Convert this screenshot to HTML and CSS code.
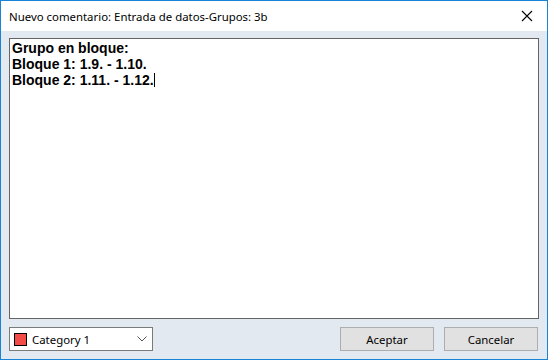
FILE: index.html
```html
<!DOCTYPE html>
<html lang="es">
<head>
<meta charset="utf-8">
<link rel="stylesheet" href="styles.css">
</head>
<body>
<div class="window">
  <div class="titlebar">
    <span class="title">Nuevo comentario: Entrada de datos-Grupos: 3b</span>
    <svg class="close" width="12" height="12" viewBox="0 0 12 12"><path d="M1 1 L11 11 M11 1 L1 11" stroke="#000" stroke-width="1.1" fill="none"/></svg>
  </div>
  <div class="content">
    <div class="editor">
      <div class="line">Grupo en bloque:</div>
      <div class="line">Bloque 1: 1.9. - 1.10.</div>
      <div class="line">Bloque 2: 1.11. - 1.12.<span class="caret"></span></div>
    </div>
    <div class="footer">
      <div class="combo">
        <span class="swatch"></span>
        <span class="combo-text">Category 1</span>
        <svg class="chev" width="10" height="6" viewBox="0 0 10 6"><path d="M0.5 0.5 L5 5 L9.5 0.5" stroke="#555" stroke-width="1" fill="none"/></svg>
      </div>
      <div class="buttons">
        <div class="btn">Aceptar</div>
        <div class="btn">Cancelar</div>
      </div>
    </div>
  </div>
</div>
</body>
</html>
```
FILE: styles.css
```css
* { box-sizing: border-box; }
html, body { margin: 0; padding: 0; background: #fff; }
.window {
  width: 548px;
  height: 360px;
  border: 1px solid #1883d7;
  display: flex;
  flex-direction: column;
  background: #e3e9f1;
  font-family: "Noto Sans", "Open Sans", sans-serif;
}
.titlebar {
  height: 30px;
  background: #fff;
  display: flex;
  align-items: center;
  justify-content: space-between;
  padding: 0 10px 0 8px;
  flex: none;
}
.title {
  font-size: 11.4px;
  color: #000;
}
.close { display: block; margin-right: 4px; }
.content {
  flex: 1;
  display: flex;
  flex-direction: column;
  padding: 7px 8px 8px 8px;
  gap: 8px;
}
.editor {
  flex: 1;
  background: #fff;
  border: 1px solid #646464;
  padding: 1px 2px;
  font-family: "Liberation Sans", Arial, sans-serif;
  font-weight: bold;
  font-size: 14px;
  line-height: 16px;
  color: #000;
}
.caret {
  display: inline-block;
  width: 1px;
  height: 14px;
  background: #000;
  vertical-align: -2px;
}
.footer {
  height: 24px;
  flex: none;
  display: flex;
  justify-content: space-between;
}
.combo {
  width: 144px;
  height: 24px;
  background: #fff;
  border: 1px solid #7a7a7a;
  display: flex;
  align-items: center;
  padding: 0 0 0 4px;
}
.swatch {
  width: 13px;
  height: 13px;
  background: #f24b48;
  border: 1px solid #000;
  flex: none;
}
.combo-text {
  font-size: 11.4px;
  margin-left: 5px;
  flex: 1;
  color: #000;
}
.chev { margin-right: 5px; display: block; }
.buttons {
  display: flex;
  gap: 10px;
  margin-right: 1px;
}
.btn {
  width: 94px;
  height: 24px;
  background: #e1e1e1;
  border: 1px solid #adadad;
  font-size: 11.4px;
  display: flex;
  align-items: center;
  justify-content: center;
  color: #000;
}
```
